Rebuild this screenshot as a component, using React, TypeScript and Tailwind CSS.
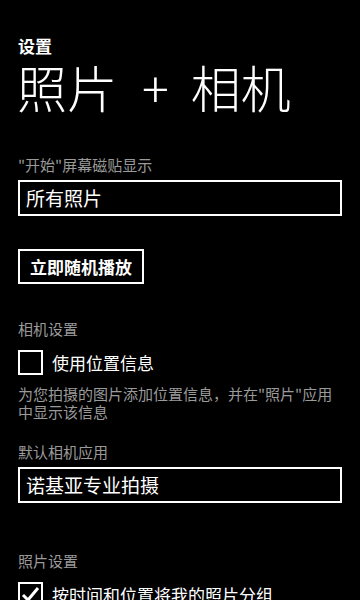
import React, { useState } from 'react';

const font = { fontFamily: '"Noto Sans CJK SC", "Noto Sans", sans-serif' };

const Label = ({ children, className = '' }: { children: React.ReactNode; className?: string }) => (
  <div className={`text-[15px] leading-[18px] text-[#9a9a9a] ${className}`}>{children}</div>
);

const Picker = ({ value, className = '' }: { value: string; className?: string }) => (
  <div className={`h-[36px] border-2 border-white flex items-center px-[6px] text-[19px] text-white ${className}`}>
    {value}
  </div>
);

const Check = ({ checked, label, onToggle }: { checked: boolean; label: string; onToggle: () => void }) => (
  <button onClick={onToggle} className="flex items-center gap-[9px] text-left">
    <span className="w-[25px] h-[25px] border-2 border-white flex items-center justify-center shrink-0">
      {checked && (
        <svg width="19" height="19" viewBox="0 0 19 19">
          <path d="M2 10 L7 15 L17 3" fill="none" stroke="white" strokeWidth="3" />
        </svg>
      )}
    </span>
    <span className="text-[17px] leading-[24px] text-white whitespace-nowrap">{label}</span>
  </button>
);

export default function App() {
  const [useLocation, setUseLocation] = useState(false);
  const [groupPhotos, setGroupPhotos] = useState(true);

  return (
    <div className="w-[360px] h-[600px] bg-black overflow-hidden text-white" style={font}>
      <div className="pl-[18px] pr-[18px] pt-[36px]">
        <div className="text-[17px] leading-[20px] font-bold">设置</div>
        <div className="text-[50px] leading-[56px] font-light mt-[2px] -ml-[1px] whitespace-nowrap">
          <span>照片</span>
          <span className="inline-block ml-[25px]">+</span>
          <span className="inline-block ml-[22px]">相机</span>
        </div>

        <Label className="mt-[42px]">"开始"屏幕磁贴显示</Label>
        <Picker value="所有照片" className="mt-[6px]" />

        <button className="mt-[33px] h-[35px] px-[10px] border-2 border-white text-[17px] font-bold text-white">
          立即随机播放
        </button>

        <Label className="mt-[36px]">相机设置</Label>
        <div className="mt-[12px]">
          <Check checked={useLocation} label="使用位置信息" onToggle={() => setUseLocation(!useLocation)} />
        </div>
        <Label className="mt-[10px] leading-[16px] w-[315px]">
          为您拍摄的图片添加位置信息，并在"照片"应用中显示该信息
        </Label>

        <Label className="mt-[22px]">默认相机应用</Label>
        <Picker value="诺基亚专业拍摄" className="mt-[6px]" />

        <Label className="mt-[49px]">照片设置</Label>
        <div className="mt-[12px]">
          <Check checked={groupPhotos} label="按时间和位置将我的照片分组" onToggle={() => setGroupPhotos(!groupPhotos)} />
        </div>
      </div>
    </div>
  );
}
